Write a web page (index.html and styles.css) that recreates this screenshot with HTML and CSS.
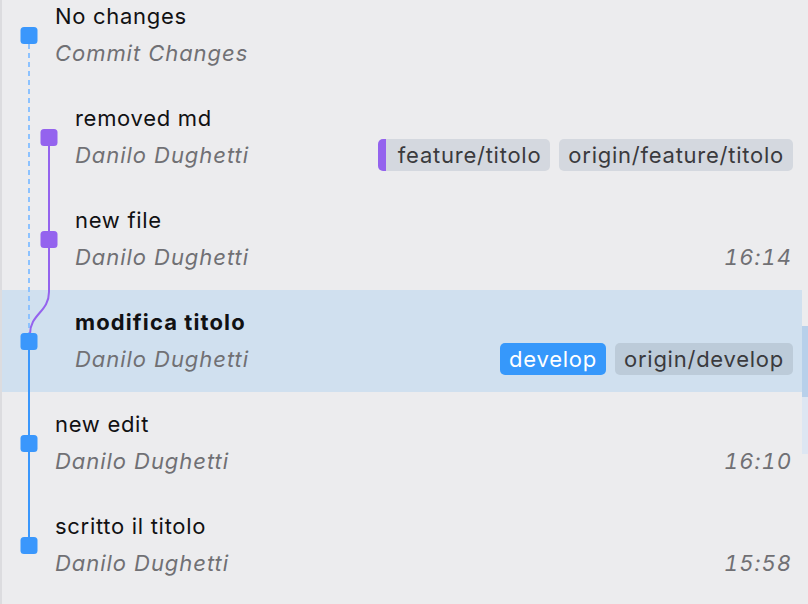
FILE: index.html
```html
<!DOCTYPE html>
<html>
<head>
<meta charset="utf-8">
<link rel="stylesheet" href="styles.css">
</head>
<body>
<div class="app">
  <div class="history">
    <svg class="graph" width="80" height="604" viewBox="0 0 80 604">
      <line x1="29" y1="44" x2="29" y2="334" stroke="#8cc2ff" stroke-width="2" stroke-dasharray="5 4"/>
      <path d="M49 137 L49 292 C49 312 30 314 30 334" fill="none" stroke="#9463ee" stroke-width="2"/>
      <line x1="29" y1="341" x2="29" y2="545" stroke="#3a97fc" stroke-width="2"/>
      <rect x="20.5" y="27" width="17" height="17" rx="3.5" fill="#3a97fc"/>
      <rect x="40.5" y="129" width="17" height="17" rx="3.5" fill="#9463ee"/>
      <rect x="40.5" y="231" width="17" height="17" rx="3.5" fill="#9463ee"/>
      <rect x="20.5" y="333" width="17" height="17" rx="3.5" fill="#3a97fc"/>
      <rect x="20.5" y="435" width="17" height="17" rx="3.5" fill="#3a97fc"/>
      <rect x="20.5" y="537" width="17" height="17" rx="3.5" fill="#3a97fc"/>
    </svg>
    <div class="rows">
      <div class="row lvl0">
        <div class="title">No changes</div>
        <div class="sub"><span class="author">Commit Changes</span></div>
      </div>
      <div class="row lvl1">
        <div class="title">removed md</div>
        <div class="sub">
          <span class="author">Danilo Dughetti</span>
          <span class="tags">
            <span class="tag tag-local">feature/titolo</span>
            <span class="tag">origin/feature/titolo</span>
          </span>
        </div>
      </div>
      <div class="row lvl1">
        <div class="title">new file</div>
        <div class="sub">
          <span class="author">Danilo Dughetti</span>
          <span class="time">16:14</span>
        </div>
      </div>
      <div class="row lvl1 selected">
        <div class="title bold">modifica titolo</div>
        <div class="sub">
          <span class="author">Danilo Dughetti</span>
          <span class="tags">
            <span class="tag tag-head">develop</span>
            <span class="tag tag-sel">origin/develop</span>
          </span>
        </div>
      </div>
      <div class="row lvl0">
        <div class="title">new edit</div>
        <div class="sub">
          <span class="author">Danilo Dughetti</span>
          <span class="time">16:10</span>
        </div>
      </div>
      <div class="row lvl0">
        <div class="title">scritto il titolo</div>
        <div class="sub">
          <span class="author">Danilo Dughetti</span>
          <span class="time">15:58</span>
        </div>
      </div>
    </div>
  </div>
  <div class="scrollbar">
    <div class="sb-gap"></div>
    <div class="sb-thumb"></div>
    <div class="sb-track"></div>
  </div>
</div>
</body>
</html>
```

FILE: styles.css
```css
html, body {
  margin: 0;
  padding: 0;
  width: 808px;
  height: 604px;
  overflow: hidden;
  background: #ececee;
  font-family: Inter, "Noto Sans", sans-serif;
}

.app {
  display: flex;
  width: 808px;
  height: 604px;
}

.history {
  position: relative;
  flex: 1;
  border-left: 2px solid #dcdcdf;
  overflow: hidden;
}

.graph {
  position: absolute;
  left: -2px;
  top: 0;
  z-index: 2;
}

.rows {
  margin-top: -16px;
  display: flex;
  flex-direction: column;
}

.row {
  height: 102px;
  box-sizing: border-box;
  padding: 18px 9px 0 53px;
  display: flex;
  flex-direction: column;
  gap: 9px;
}

.row.lvl1 {
  padding-left: 73px;
}

.row.selected {
  background: #d0e0ef;
}

.title {
  font-size: 22px;
  line-height: 28px;
  color: #111113;
  letter-spacing: 0.7px;
}

.title.bold {
  font-weight: 700;
  letter-spacing: 1.1px;
}

.sub {
  display: flex;
  justify-content: space-between;
  align-items: center;
  height: 28px;
}

.author, .time {
  font-size: 22px;
  line-height: 28px;
  font-style: italic;
  color: #707074;
  letter-spacing: 0.95px;
}

.time {
  margin-right: 1px;
  font-variant-numeric: tabular-nums;
  letter-spacing: 1px;
}

.tags {
  display: flex;
  gap: 9px;
}

.tag {
  height: 32px;
  line-height: 32px;
  padding: 0 9px;
  border-radius: 5px;
  background: #d4d8df;
  color: #3a3a3d;
  font-size: 22px;
  letter-spacing: 0.75px;
  box-sizing: border-box;
}

.tag-local {
  border-left: 8px solid #9463ee;
  padding-left: 12px;
}

.tag-head {
  background: #3698fb;
  color: #ffffff;
}

.tag-sel {
  background: #bccbd9;
}

.scrollbar {
  width: 6px;
  display: flex;
  flex-direction: column;
}

.sb-gap {
  height: 326px;
}

.sb-thumb {
  height: 71px;
  background: #b8d0ea;
}

.sb-track {
  height: 57px;
  background: #dde6f2;
}
```
